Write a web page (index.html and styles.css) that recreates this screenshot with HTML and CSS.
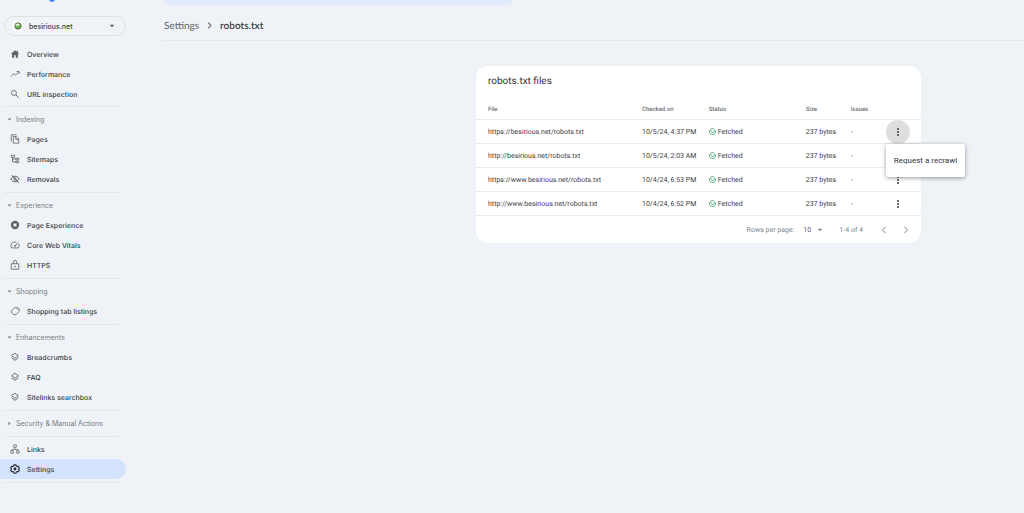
FILE: index.html
```html
<!DOCTYPE html>
<html lang="en">
<head>
<meta charset="utf-8">
<title>robots.txt</title>
<link rel="stylesheet" href="styles.css">
</head>
<body>
<svg class="defs" aria-hidden="true">
  <symbol id="down" viewBox="0 0 10 10"><path d="M1 3h8L5 7z" fill="currentColor"/></symbol>
  <symbol id="right" viewBox="0 0 10 10"><path d="M3 1v8l4-4z" fill="currentColor"/></symbol>
  <symbol id="layers" viewBox="0 0 24 24"><path d="M12 3l8 6-8 6-8-6zM4 14l8 6 8-6" fill="none" stroke="currentColor" stroke-width="2.2"/></symbol>
  <symbol id="check" viewBox="0 0 24 24"><path d="M21 8.500a10 10 0 1 1-4-4.500M7 11l5 5 9-9" fill="none" stroke="#1e9655" stroke-width="2.800"/></symbol>
  <symbol id="more" viewBox="0 0 24 24"><g fill="currentColor"><circle cx="12" cy="3" r="3"/><circle cx="12" cy="12" r="3"/><circle cx="12" cy="21" r="3"/></g></symbol>
</svg>
<div class="app">
  <aside class="sidebar">
    <div class="brand"><svg class="logo" viewBox="0 0 6 2"><path d="M0 0h6Q5 2 3 2T0 0z" fill="#4285f4"/></svg></div>
    <button class="property" type="button">
      <span class="favicon"><svg viewBox="0 0 24 24"><circle cx="12" cy="12" r="9.500" fill="#69b34c" stroke="#536451" stroke-width="3"/><path d="M4 12c1-9 11-9 13-3-3 5-8 1-13 3z" fill="#e2f4d5"/></svg></span>
      <span class="property-name">besirious.net</span>
      <svg class="caret" viewBox="0 0 10 10"><use href="#down"/></svg>
    </button>
    <nav>
      <section class="group">
        <a class="item" href="#"><svg viewBox="0 0 24 24"><path d="M12 3L2 12h3v9h5v-6h4v6h5v-9h3l-3-3V4h-3v3z" fill="currentColor"/></svg>Overview</a>
        <a class="item" href="#"><svg viewBox="0 0 24 24"><path d="M2 18l7-7 4 4 8-8M16 6h6v6" fill="none" stroke="currentColor" stroke-width="2"/></svg>Performance</a>
        <a class="item" href="#"><svg viewBox="0 0 24 24"><circle cx="9.500" cy="9.500" r="6" fill="none" stroke="currentColor" stroke-width="2"/><path d="M14 14l7 7" stroke="currentColor" stroke-width="2.400"/></svg>URL inspection</a>
      </section>
      <section class="group">
        <button class="heading" type="button"><svg viewBox="0 0 10 10"><use href="#down"/></svg>Indexing</button>
        <a class="item" href="#"><svg viewBox="0 0 24 24"><path d="M16 2H3v16M8 6h7l6 6v10H8zM14 6v7h7" fill="none" stroke="currentColor" stroke-width="2"/></svg>Pages</a>
        <a class="item" href="#"><svg viewBox="0 0 24 24"><path d="M3 3h8v5H3zM14 10h7v4h-7zM14 17h7v4h-7zM6 8v11h8M6 12h8" fill="none" stroke="currentColor" stroke-width="2"/></svg>Sitemaps</a>
        <a class="item" href="#"><svg viewBox="0 0 24 24"><path d="M2 12c5-9 15-9 20 0-5 9-15 9-20 0zM4 3l17 18" fill="none" stroke="currentColor" stroke-width="2.400"/><circle cx="12" cy="12" r="3" fill="none" stroke="currentColor" stroke-width="2"/></svg>Removals</a>
      </section>
      <section class="group">
        <button class="heading" type="button"><svg viewBox="0 0 10 10"><use href="#down"/></svg>Experience</button>
        <a class="item" href="#"><svg viewBox="0 0 24 24"><circle cx="12" cy="12" r="7.500" fill="none" stroke="currentColor" stroke-width="5"/><path d="M12 3v6M12 15v6M3 12h6M15 12h6" stroke="currentColor" stroke-width="3"/></svg>Page Experience</a>
        <a class="item" href="#"><svg viewBox="0 0 24 24"><path d="M15 5.500A9 9 0 0 0 4 19h16a9 9 0 0 0 1-10M12 15l7-9" fill="none" stroke="currentColor" stroke-width="2"/><circle cx="12" cy="14" r="2.200" fill="currentColor"/></svg>Core Web Vitals</a>
        <a class="item" href="#"><svg viewBox="0 0 24 24"><path d="M3 9h18v13H3zM8 9V5a4 4 0 0 1 8 0v4" fill="none" stroke="currentColor" stroke-width="2"/><circle cx="12" cy="15.500" r="2" fill="currentColor"/></svg>HTTPS</a>
      </section>
      <section class="group">
        <button class="heading" type="button"><svg viewBox="0 0 10 10"><use href="#down"/></svg>Shopping</button>
        <a class="item" href="#"><svg viewBox="0 0 24 24"><path d="M3 12l8-8h8l3 3v6l-8 8H9l-6-6z" fill="none" stroke="currentColor" stroke-width="2" stroke-linejoin="round"/><circle cx="17.500" cy="8" r="1.300" fill="currentColor"/></svg>Shopping tab listings</a>
      </section>
      <section class="group">
        <button class="heading" type="button"><svg viewBox="0 0 10 10"><use href="#down"/></svg>Enhancements</button>
        <a class="item" href="#"><svg viewBox="0 0 24 24"><use href="#layers"/></svg>Breadcrumbs</a>
        <a class="item" href="#"><svg viewBox="0 0 24 24"><use href="#layers"/></svg>FAQ</a>
        <a class="item" href="#"><svg viewBox="0 0 24 24"><use href="#layers"/></svg>Sitelinks searchbox</a>
      </section>
      <section class="group">
        <button class="heading" type="button"><svg viewBox="0 0 10 10"><use href="#right"/></svg>Security &amp; Manual Actions</button>
      </section>
      <section class="group">
        <a class="item" href="#"><svg viewBox="0 0 24 24"><path d="M9 2h6v6H9zM2 16h6v6H2zM16 16h6v6h-6zM12 8v5M5 16v-3h14v3" fill="none" stroke="currentColor" stroke-width="1.800"/></svg>Links</a>
        <a class="item active" href="#" aria-current="page"><svg viewBox="0 0 24 24"><path d="M9.500 2h5l.7 3 2 1.200 3-.9 2.300 4.200L20.300 12l2.200 2.500-2.300 4.200-3-.9-2 1.200-.7 3h-5l-.7-3-2-1.200-3 .9-2.300-4.200L3.700 12 1.500 9.500l2.300-4.200 3 .9 2-1.200z" fill="none" stroke="currentColor" stroke-width="2.600" stroke-linejoin="round"/><circle cx="12" cy="12" r="3.500" fill="currentColor"/></svg>Settings</a>
      </section>
    </nav>
  </aside>
  <main class="main">
    <div class="search"></div>
    <nav class="crumbs" aria-label="Breadcrumb">
      <a href="#">Settings</a>
      <svg viewBox="0 0 10 10"><path d="M3 1l4 4-4 4" fill="none" stroke="currentColor" stroke-width="1.500"/></svg>
      <span class="current">robots.txt</span>
    </nav>
    <div class="content">
      <section class="card">
        <h1 class="title">robots.txt files</h1>
        <table class="files">
          <colgroup><col class="c-file"><col class="c-date"><col class="c-status"><col class="c-size"><col class="c-issues"><col class="c-more"></colgroup>
          <thead><tr><th>File</th><th>Checked on</th><th>Status</th><th>Size</th><th>Issues</th><th></th></tr></thead>
          <tbody>
            <tr><td>https://besirious.net/robots.txt</td><td>10/5/24, 4:37 PM</td><td><span class="status"><svg viewBox="0 0 24 24"><use href="#check"/></svg>Fetched</span></td><td>237 bytes</td><td>-</td>
              <td class="actions"><button class="more open" type="button" aria-label="More options"><svg viewBox="0 0 24 24"><use href="#more"/></svg></button><div class="menu"><button class="menu-item" type="button">Request a recrawl</button></div></td></tr>
            <tr><td>http://besirious.net/robots.txt</td><td>10/5/24, 2:03 AM</td><td><span class="status"><svg viewBox="0 0 24 24"><use href="#check"/></svg>Fetched</span></td><td>237 bytes</td><td>-</td><td><button class="more" type="button" aria-label="More options"><svg viewBox="0 0 24 24"><use href="#more"/></svg></button></td></tr>
            <tr><td>https://www.besirious.net/robots.txt</td><td>10/4/24, 6:53 PM</td><td><span class="status"><svg viewBox="0 0 24 24"><use href="#check"/></svg>Fetched</span></td><td>237 bytes</td><td>-</td><td><button class="more" type="button" aria-label="More options"><svg viewBox="0 0 24 24"><use href="#more"/></svg></button></td></tr>
            <tr><td>http://www.besirious.net/robots.txt</td><td>10/4/24, 6:52 PM</td><td><span class="status"><svg viewBox="0 0 24 24"><use href="#check"/></svg>Fetched</span></td><td>237 bytes</td><td>-</td><td><button class="more" type="button" aria-label="More options"><svg viewBox="0 0 24 24"><use href="#more"/></svg></button></td></tr>
          </tbody>
        </table>
        <div class="pager">
          <label for="rows">Rows per page:</label>
          <span class="rows"><select id="rows"><option>10</option></select><svg viewBox="0 0 10 10"><use href="#down"/></svg></span>
          <span class="range">1-4 of 4</span>
          <button type="button" aria-label="Previous page"><svg viewBox="0 0 10 10"><path d="M7 1L3 5l4 4" fill="none" stroke="currentColor" stroke-width="1.300"/></svg></button>
          <button type="button" aria-label="Next page"><svg viewBox="0 0 10 10"><path d="M3 1l4 4-4 4" fill="none" stroke="currentColor" stroke-width="1.300"/></svg></button>
        </div>
      </section>
    </div>
  </main>
</div>
</body>
</html>
```
FILE: styles.css
```css
* { box-sizing: border-box; }
body { margin: 0; background: #eff3f8; color: #3c4043; font-family: Roboto, sans-serif; font-size: 7px; text-rendering: geometricPrecision; }
button, select { margin: 0; padding: 0; border: 0; background: none; color: inherit; font: inherit; appearance: none; }
a { color: inherit; text-decoration: none; }
svg { display: block; flex: none; }
.defs { width: 0; height: 0; position: absolute; }
.app { display: grid; grid-template-columns: 126px 1fr; column-gap: 37px; min-height: 100vh; }

.sidebar { font-family: Inter, sans-serif; font-weight: 500; }
.brand { height: 16px; padding-left: 49px; }
.logo { width: 6px; height: 2px; }
.property { display: flex; align-items: center; width: 122px; height: 20px; margin: 0 0 8px 4px; padding: 0 10px 0 8px; border: 1px solid #dde1e6; border-radius: 10px; }
.favicon { padding: 1px; background: #fff; }
.favicon svg { width: 8px; height: 8px; }
.property-name { flex: 1; padding-left: 6px; text-align: left; }
.caret { width: 6px; height: 6px; color: #5f6368; }
.group { padding-top: 2px; }
.group:first-child { padding-top: 0; }
.group::after { content: ""; display: block; height: 1px; margin: 3px 7px 0 4px; background: #e4e8ed; }
.group:first-child::after { margin-top: 2px; }
.item { display: flex; align-items: center; gap: 7px; height: 20px; padding-left: 10px; }
.item svg { width: 10px; height: 10px; color: #5f6368; }
.item.active { background: #d3e3fd; border-radius: 0 10px 10px 0; }
.item.active svg { color: #25282d; }
.heading { display: flex; align-items: center; gap: 4px; height: 20px; padding-left: 7px; color: #777c81; font-weight: 400; }
.heading svg { width: 5px; height: 5px; }

.main { min-width: 0; }
.search { width: 349px; max-width: 100%; height: 5px; margin-left: 1px; border-radius: 0 0 10px 10px; background: #e1ebfd; }
.crumbs { display: flex; align-items: center; gap: 7px; height: 36px; padding: 6px 0 0 1px; border-bottom: 1px solid #e4e8ec; color: #5f6368; font-family: Lato, sans-serif; font-size: 10px; }
.crumbs svg { width: 7px; height: 7px; }
.current { color: #3c4043; font-weight: 600; }
.content { display: grid; grid-template-columns: 313fr 445fr 103fr; padding-top: 25px; }
.card { grid-column: 2; border-radius: 12px; background: #fff; }
.title { margin: 0; padding: 9px 12px 7px; font-size: 10px; font-weight: 400; line-height: 14px; color: #303438; }
.files { width: 100%; border-collapse: separate; border-spacing: 0; table-layout: fixed; }
.c-file { width: 37.3%; }
.c-date { width: 15%; }
.c-status { width: 21.8%; }
.c-size { width: 10.1%; }
.c-issues { width: 7.9%; }
.files th, .files td { height: 24px; padding: 0; border-bottom: 1px solid #eaecee; text-align: left; white-space: nowrap; }
.files th { padding-top: 4px; font-size: 6px; font-weight: 500; color: #6c7074; }
.files th:first-child, .files td:first-child { padding-left: 12px; }
.status { display: flex; align-items: center; gap: 2px; }
.status svg { width: 7px; height: 7px; }
.actions { position: relative; }
.more { display: grid; place-items: center; width: 24px; height: 24px; margin-bottom: -1px; border-radius: 50%; }
.more svg { width: 8px; height: 8px; }
.more.open { background: #dedede; }
.menu { position: absolute; z-index: 1; top: 24px; left: 0; padding: 7px 0; border-radius: 2px; background: #fff; box-shadow: 0 1px 4px rgba(0, 0, 0, .4); }
.menu-item { display: block; height: 19px; padding: 0 8px; color: #303438; font-size: 8px; }
.pager { display: flex; align-items: center; justify-content: flex-end; height: 27px; padding-right: 11px; color: #80868b; }
.rows { display: flex; align-items: center; gap: 6px; margin: 0 16px 0 9px; color: #5f6368; }
.rows svg { width: 6px; height: 6px; color: #80868b; }
.range { margin-right: 17px; }
.pager button { margin-right: 14px; color: #a5a9ad; }
.pager button:last-child { margin-right: 0; }
.pager button svg { width: 8px; height: 8px; }
```
